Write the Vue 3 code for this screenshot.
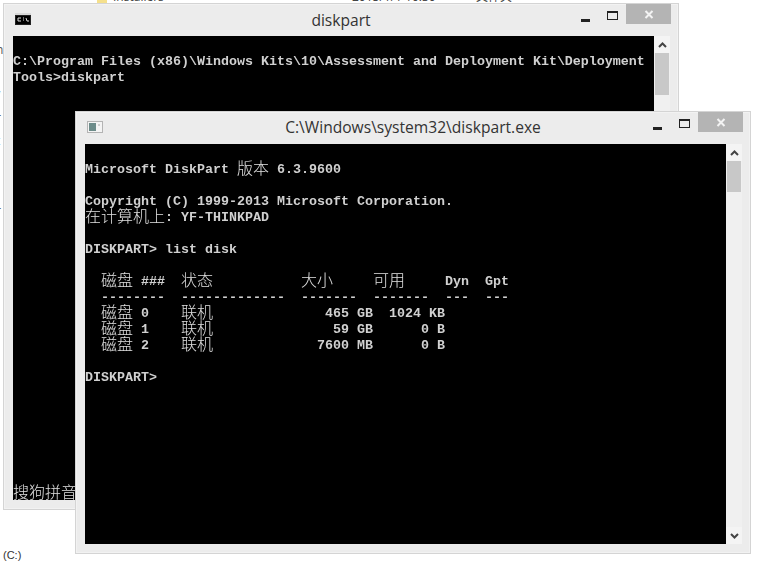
<script setup>
const split = (line) => line.match(/[\u4e00-\u9fff]+|[^\u4e00-\u9fff]+/g) || [''];
const seg = (line) => split(line).map((t) => ({ t, cjk: /[\u4e00-\u9fff]/.test(t) }));

const windows = [
  {
    id: 'back',
    title: 'diskpart',
    icon: 'cmd',
    lines: [
      '',
      'C:\\Program Files (x86)\\Windows Kits\\10\\Assessment and Deployment Kit\\Deployment',
      'Tools>diskpart',
      ...Array(25).fill(''),
      '搜狗拼音',
    ],
  },
  {
    id: 'front',
    title: 'C:\\Windows\\system32\\diskpart.exe',
    icon: 'app',
    lines: [
      '',
      'Microsoft DiskPart 版本 6.3.9600',
      '',
      'Copyright (C) 1999-2013 Microsoft Corporation.',
      '在计算机上: YF-THINKPAD',
      '',
      'DISKPART> list disk',
      '',
      '  磁盘 ###  状态           大小     可用     Dyn  Gpt',
      '  --------  -------------  -------  -------  ---  ---',
      '  磁盘 0    联机              465 GB  1024 KB',
      '  磁盘 1    联机               59 GB      0 B',
      '  磁盘 2    联机             7600 MB      0 B',
      '',
      'DISKPART> ',
    ],
  },
].map((w) => ({ ...w, rows: w.lines.map(seg) }));
</script>

<template>
  <div class="desktop">
    <div class="files">
      <span class="folder"></span>
      <span class="fname">Installers</span>
      <span class="fdate">2015/1/1 10:30</span>
      <span class="ftype">文件夹</span>
    </div>
    <div class="edge">
      <span class="e1">n</span>
      <span class="e2">/</span>
      <span class="e3">r</span>
      <span class="e4">t</span>
      <span class="e5">:</span>
      <span class="e6">r</span>
    </div>
    <span class="drive">(C:)</span>

    <section v-for="w in windows" :key="w.id" class="win" :class="w.id">
      <header class="bar">
        <svg v-if="w.icon === 'cmd'" class="ico" width="16" height="12" viewBox="0 0 16 12">
          <rect width="16" height="12" fill="#222" />
          <rect x="1" y="3" width="14" height="8" fill="#000" />
          <rect y="0" width="16" height="2" fill="#d8d8d8" />
          <path d="M3 5h3M3 5v3M3 8h3M8 5h1M8 7h1M11 5l1 3h2" stroke="#ddd" fill="none" />
        </svg>
        <svg v-else class="ico" width="16" height="12" viewBox="0 0 16 12">
          <rect x=".5" y=".5" width="15" height="11" fill="#f4f4f4" stroke="#b4b4b4" />
          <rect x="2" y="2" width="7" height="8" fill="#6d8c8a" />
          <rect x="11" y="3" width="2" height="2" fill="#d0d0d0" />
        </svg>
        <span class="title">{{ w.title }}</span>
        <div class="controls">
          <svg class="min" width="9" height="3" viewBox="0 0 9 3"><rect width="9" height="3" fill="#222" /></svg>
          <svg class="max" width="11" height="9" viewBox="0 0 11 9">
            <rect x=".5" y=".5" width="10" height="8" fill="none" stroke="#222" />
            <rect x="0" y="0" width="11" height="2" fill="#222" />
          </svg>
          <div class="close">
            <svg width="10" height="9" viewBox="0 0 10 9">
              <path d="M1.500 1l7 7M8.500 1l-7 7" stroke="#fff" stroke-width="2" opacity=".85" />
            </svg>
          </div>
        </div>
      </header>
      <div class="body">
        <div class="console">
          <div v-for="(row, i) in w.rows" :key="i" class="row">
            <span v-for="(s, j) in row" :key="j" class="run" :class="{ cjk: s.cjk }">{{ s.t }}</span>
          </div>
        </div>
        <aside class="scroll">
          <div class="btn">
            <svg width="9" height="6" viewBox="0 0 9 6"><path d="M1 5l3.500-3.500L8 5" fill="none" stroke="#444" stroke-width="2" /></svg>
          </div>
          <div class="thumb"></div>
          <div class="track"></div>
          <div class="btn">
            <svg width="9" height="6" viewBox="0 0 9 6"><path d="M1 1l3.500 3.500L8 1" fill="none" stroke="#444" stroke-width="2" /></svg>
          </div>
        </aside>
      </div>
    </section>
  </div>
</template>

<style>
html, body { background: #fff; }
</style>

<style scoped>
.desktop {
  position: relative;
  width: 757px;
  height: 561px;
  overflow: hidden;
  background: #fff;
  font-family: "Open Sans", "Noto Sans CJK SC", sans-serif;
}
.files {
  position: absolute;
  left: 0;
  top: 0;
  width: 600px;
  height: 3px;
  overflow: hidden;
  font-size: 12px;
  line-height: 12px;
  color: #444;
}
.files span { position: absolute; top: -9px; white-space: nowrap; }
.files .folder { left: 97px; top: 0; width: 10px; height: 3px; background: #f5e08c; }
.fname { left: 113px; }
.fdate { left: 352px; }
.ftype { left: 476px; }
.edge {
  position: absolute;
  left: 0;
  top: 0;
  width: 3px;
  height: 300px;
  overflow: hidden;
  font-size: 12px;
  color: #555;
}
.edge span { position: absolute; left: -4px; line-height: 12px; }
.e1 { top: 44px; }
.e2 { top: 90px; }
.e3 { top: 112px; }
.e4 { top: 135px; }
.e5 { top: 180px; }
.e6 { top: 205px; }
.drive {
  position: absolute;
  left: 3px;
  top: 548px;
  font-family: "Liberation Sans", sans-serif;
  font-size: 11px;
  line-height: 14px;
  color: #333;
}
.win {
  position: absolute;
  box-sizing: border-box;
  display: flex;
  flex-direction: column;
  background: #ececec;
  border: 1px solid #d4d4d4;
  box-shadow: inset 0 0 0 1px #f2f2f2;
}
.back { left: 3px; top: 3px; width: 676px; height: 507px; }
.front { left: 75px; top: 111px; width: 676px; height: 443px; }
.bar {
  position: relative;
  height: 32px;
  flex: none;
  display: flex;
  align-items: center;
  justify-content: center;
}
.ico { position: absolute; left: 11px; top: 9px; }
.title {
  font-size: 15.6px;
  line-height: 20px;
  color: #333;
}
.front .title { margin-top: -3px; }
.back .title { margin-top: -1px; }
.controls {
  position: absolute;
  right: 7px;
  top: 0;
  display: flex;
  align-items: flex-start;
}
.min { margin-top: 15px; margin-right: 17px; }
.max { margin-top: 7px; margin-right: 8px; }
.close {
  width: 45px;
  height: 20px;
  background: #b4b4b4;
  display: flex;
  align-items: center;
  justify-content: center;
}
.body {
  flex: 1;
  min-height: 0;
  display: flex;
  padding: 0 8px 9px 9px;
}
.console {
  width: 641px;
  flex: none;
  overflow: hidden;
  background: #000;
  color: #d0d0d0;
  font-family: "Liberation Mono", monospace;
  font-size: 13.333px;
  font-weight: 700;
  filter: grayscale(1);
}
.row {
  display: flex;
  height: 16px;
  white-space: pre;
}
.run {
  display: block;
  height: 16px;
  line-height: 20px;
}
.cjk {
  font-family: "Noto Sans CJK SC", sans-serif;
  font-size: 16px;
  font-weight: 300;
  line-height: 15px;
  color: #e0e0e0;
}
.scroll {
  flex: 1;
  display: flex;
  flex-direction: column;
  background: #f0f0f0;
}
.btn {
  height: 17px;
  flex: none;
  display: flex;
  align-items: center;
  justify-content: center;
  background: #f4f4f4;
}
.thumb { flex: none; background: #c8c8c8; margin: 0 1px; }
.back .thumb { height: 42px; }
.front .thumb { height: 31px; }
.track { flex: 1; }
</style>
